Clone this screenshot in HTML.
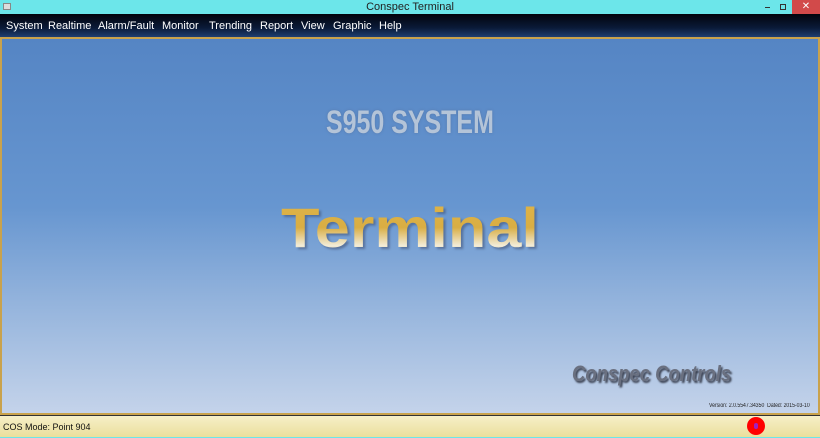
<!DOCTYPE html>
<html><head><style>
*{margin:0;padding:0;box-sizing:border-box}
body{width:820px;height:437px;overflow:hidden;font-family:"Liberation Sans",sans-serif;background:#6ce6ea;position:relative}
.title{position:absolute;top:0;left:0;width:820px;height:14px;background:#6ce6ea;font-size:11px;color:#222;text-align:center;line-height:14px}
.menu{position:absolute;top:14px;left:0;width:820px;height:23px;background:linear-gradient(#02040c,#0a1a38 60%,#1e3e70);color:#fff;font-size:11px;line-height:24px}
.menu span{position:absolute}
.main{position:absolute;top:37px;left:0;width:820px;height:378px;border:2px solid #c9a24c;background:linear-gradient(#5585c4 0%,#6796d0 45%,#93b3dc 70%,#c4d3ea 100%)}
.s950{position:absolute;left:326px;top:104px;font-size:32px;font-weight:bold;color:#b4c4d8;white-space:nowrap;transform-origin:left top;transform:scaleX(0.78);text-shadow:0 0 3px rgba(80,100,140,.5)}
.term{position:absolute;left:281px;top:195px;font-size:56px;font-weight:bold;white-space:nowrap;transform-origin:left top;transform:scaleX(1.125);background:linear-gradient(#e0b448 0%,#d9ae44 50%,#f2ecd8 78%,#d6a844 100%);-webkit-background-clip:text;color:transparent;filter:drop-shadow(2px 2px 1px rgba(50,60,90,.45))}
.cc{position:absolute;left:572px;top:361px;font-size:22px;font-weight:bold;font-style:italic;color:#6a7080;white-space:nowrap;transform-origin:left top;transform:scaleX(0.84);text-shadow:2px 2px 2px #3a4050}
.ver{position:absolute;left:709px;top:403px;font-size:6px;color:#222;white-space:nowrap;transform-origin:left top;transform:scaleX(0.85)}
.status{position:absolute;top:415px;left:0;width:820px;height:22px;background:linear-gradient(#f6efc8,#ebdf9c);border-top:1px solid #333;font-size:9px;line-height:22px;padding-left:3px;color:#111}
.dot{position:absolute;left:747px;top:417px;width:18px;height:18px;border-radius:50%;background:#f00}
.dot i{position:absolute;left:7px;top:6px;width:4px;height:6px;background:#a020c0;border-radius:2px}
.x{position:absolute;left:792px;top:0;width:28px;height:14px;background:#d24a4a;color:#fff;font-size:10px;text-align:center;line-height:14px}
</style></head><body>
<div class="title">Conspec Terminal</div>
<div style="position:absolute;left:3px;top:3px;width:8px;height:7px;background:#ddd;border:1px solid #888"></div>
<div style="position:absolute;left:765px;top:7px;width:5px;height:1px;background:#333"></div>
<div style="position:absolute;left:780px;top:4px;width:6px;height:6px;border:1px solid #333"></div>
<div class="x">✕</div>
<div class="menu">
<span style="left:6px">System</span><span style="left:48px">Realtime</span><span style="left:98px">Alarm/Fault</span><span style="left:162px">Monitor</span><span style="left:209px">Trending</span><span style="left:260px">Report</span><span style="left:301px">View</span><span style="left:333px">Graphic</span><span style="left:379px">Help</span>
</div>
<div class="main"></div>
<div class="s950">S950 SYSTEM</div>
<div class="term">Terminal</div>
<div class="cc">Conspec Controls</div>
<div class="ver">Version: 2.0.5547.34350 &nbsp;Dated: 2015-03-10</div>
<div class="status">COS Mode: Point 904</div>
<div class="dot"><i></i></div>
</body></html>
